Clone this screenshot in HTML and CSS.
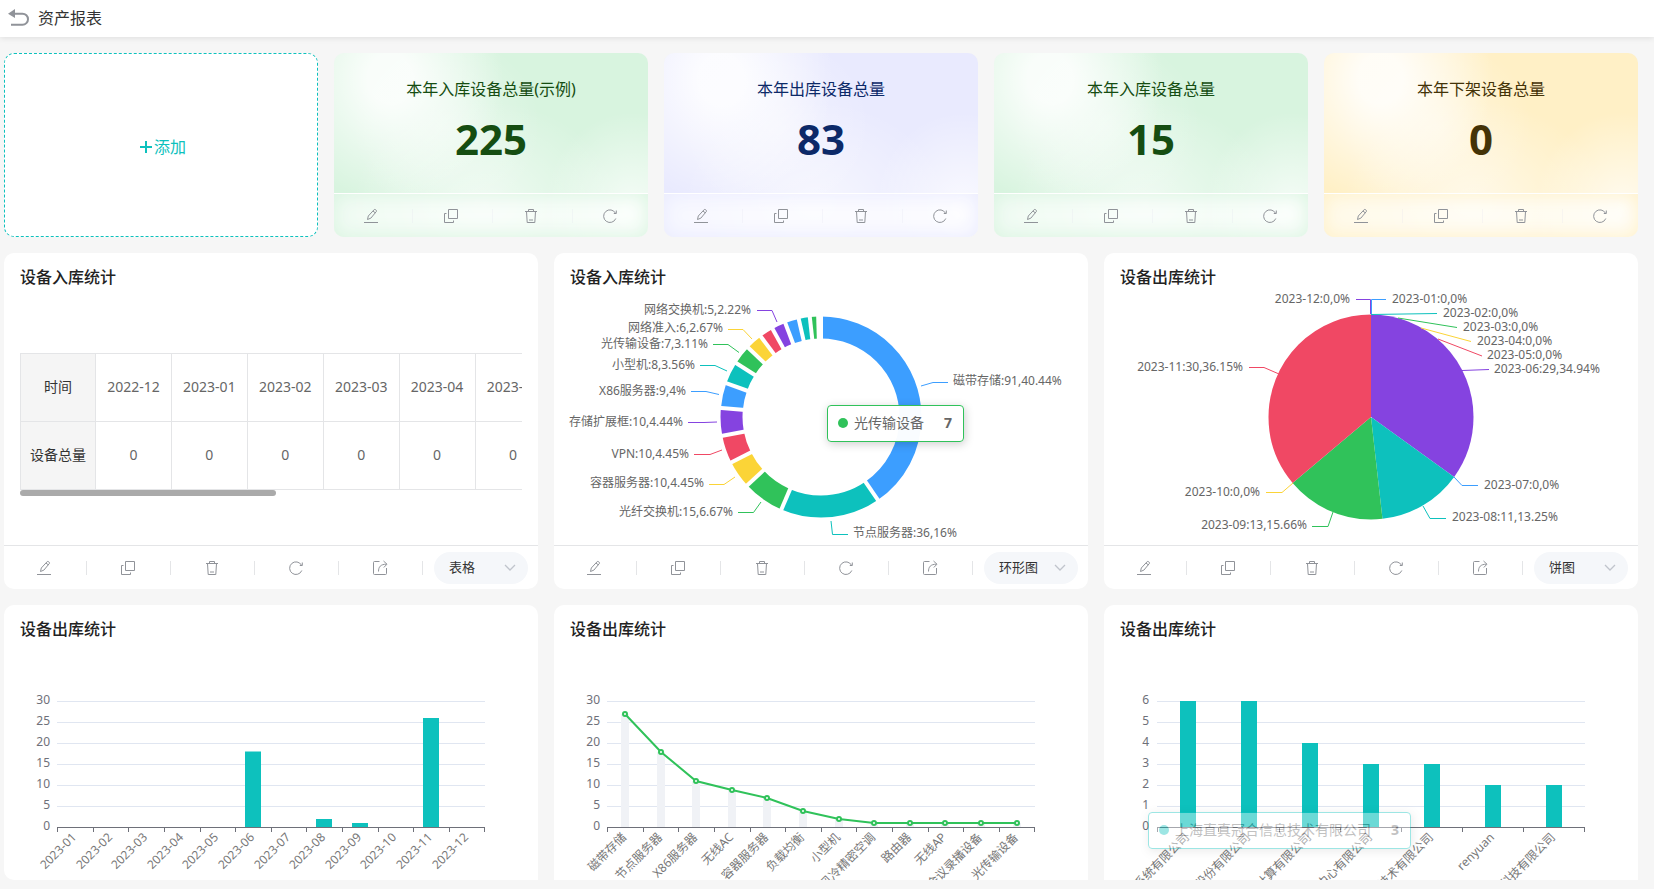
FILE: index.html
```html
<!DOCTYPE html>
<html lang="zh-CN">
<head>
<meta charset="utf-8">
<title>资产报表</title>
<link rel="stylesheet" href="styles.css">
</head>
<body>
<svg class="sprite" aria-hidden="true">
  <symbol id="i-edit" viewBox="0 0 16 16"><path d="M1 14.500h14M4.500 11.500l.8-3.500 6-6.500c.6-.6 2.700 1 2.200 1.800l-5.600 6.800zM10 3l2.200 1.800"/></symbol>
  <symbol id="i-copy" viewBox="0 0 16 16"><path d="M5.500 1.500h9v9h-9zM3.500 5.500h-2v9h9v-2"/></symbol>
  <symbol id="i-trash" viewBox="0 0 16 16"><path d="M2 3.500h12M5.500 3.500V1.500h5v2M3.500 3.500l.7 11h7.600l.7-11M6 12h4"/></symbol>
  <symbol id="i-refresh" viewBox="0 0 16 16"><path d="M13.800 10.500A6.300 6.300 0 1 1 13.500 5.200M14.300 2.500V5.500H11.800"/></symbol>
  <symbol id="i-share" viewBox="0 0 16 16"><path d="M7.500 1.500H2.500a1 1 0 0 0-1 1v11a1 1 0 0 0 1 1h11a1 1 0 0 0 1-1V8M6.500 11.500C6.500 7 8.500 4.200 14.500 4.200M11.500 1l3.500 3.200L11.800 7.500"/></symbol>
</svg>

<header class="topbar">
  <button class="back" aria-label="返回"><svg width="22" height="18" viewBox="0 0 22 18"><path class="head" d="M0 4.700L7 0v9z"/><path d="M6 4.700h8.500a5.500 5.500 0 0 1 0 11H3"/></svg></button>
  <h1>资产报表</h1>
</header>

<main class="board">
  <section class="stats">
    <button class="add"><svg width="12" height="12" viewBox="0 0 12 12"><path d="M6 0v12M0 6h12"/></svg>添加</button>
    <article class="stat green">
      <div class="stat-body"><h2>本年入库设备总量(示例)</h2><strong>225</strong></div>
      <ul class="tools">
        <li><button aria-label="编辑"><svg><use href="#i-edit"/></svg></button></li>
        <li><button aria-label="复制"><svg><use href="#i-copy"/></svg></button></li>
        <li><button aria-label="删除"><svg><use href="#i-trash"/></svg></button></li>
        <li><button aria-label="刷新"><svg><use href="#i-refresh"/></svg></button></li>
      </ul>
    </article>
    <article class="stat blue">
      <div class="stat-body"><h2>本年出库设备总量</h2><strong>83</strong></div>
      <ul class="tools">
        <li><button aria-label="编辑"><svg><use href="#i-edit"/></svg></button></li>
        <li><button aria-label="复制"><svg><use href="#i-copy"/></svg></button></li>
        <li><button aria-label="删除"><svg><use href="#i-trash"/></svg></button></li>
        <li><button aria-label="刷新"><svg><use href="#i-refresh"/></svg></button></li>
      </ul>
    </article>
    <article class="stat green">
      <div class="stat-body"><h2>本年入库设备总量</h2><strong>15</strong></div>
      <ul class="tools">
        <li><button aria-label="编辑"><svg><use href="#i-edit"/></svg></button></li>
        <li><button aria-label="复制"><svg><use href="#i-copy"/></svg></button></li>
        <li><button aria-label="删除"><svg><use href="#i-trash"/></svg></button></li>
        <li><button aria-label="刷新"><svg><use href="#i-refresh"/></svg></button></li>
      </ul>
    </article>
    <article class="stat yellow">
      <div class="stat-body"><h2>本年下架设备总量</h2><strong>0</strong></div>
      <ul class="tools">
        <li><button aria-label="编辑"><svg><use href="#i-edit"/></svg></button></li>
        <li><button aria-label="复制"><svg><use href="#i-copy"/></svg></button></li>
        <li><button aria-label="删除"><svg><use href="#i-trash"/></svg></button></li>
        <li><button aria-label="刷新"><svg><use href="#i-refresh"/></svg></button></li>
      </ul>
    </article>
  </section>

  <section class="charts">
    <article class="card">
      <h2>设备入库统计</h2>
      <div class="card-body table-body">
        <div class="scroller">
          <table>
            <tr><th scope="row">时间</th><td>2022-12</td><td>2023-01</td><td>2023-02</td><td>2023-03</td><td>2023-04</td><td>2023-05</td><td>2023-06</td><td>2023-07</td><td>2023-08</td><td>2023-09</td><td>2023-10</td><td>2023-11</td></tr>
            <tr><th scope="row">设备总量</th><td>0</td><td>0</td><td>0</td><td>0</td><td>0</td><td>0</td><td>0</td><td>0</td><td>0</td><td>0</td><td>0</td><td>0</td></tr>
          </table>
        </div>
        <div class="track"><div class="thumb"></div></div>
      </div>
      <div class="card-foot">
        <ul class="tools">
          <li><button aria-label="编辑"><svg><use href="#i-edit"/></svg></button></li>
          <li><button aria-label="复制"><svg><use href="#i-copy"/></svg></button></li>
          <li><button aria-label="删除"><svg><use href="#i-trash"/></svg></button></li>
          <li><button aria-label="刷新"><svg><use href="#i-refresh"/></svg></button></li>
          <li><button aria-label="导出"><svg><use href="#i-share"/></svg></button></li>
        </ul>
        <label class="pick"><select aria-label="图表类型"><option>表格</option><option>环形图</option><option>饼图</option></select><svg viewBox="0 0 12 8"><path d="M1 1l5 5 5-5"/></svg></label>
      </div>
    </article>

    <article class="card">
      <h2>设备入库统计</h2>
      <div class="card-body">
        <svg class="chart" viewBox="0 0 534 256">
          <g class="ring" transform="rotate(-90 267 128)">
            <circle cx="267" cy="128" r="89.500" pathLength="225" class="s-blue" stroke-dasharray="91 225"/>
            <circle cx="267" cy="128" r="89.500" pathLength="225" class="s-teal" stroke-dasharray="36 225" stroke-dashoffset="-91"/>
            <circle cx="267" cy="128" r="89.500" pathLength="225" class="s-green" stroke-dasharray="15 225" stroke-dashoffset="-127"/>
            <circle cx="267" cy="128" r="89.500" pathLength="225" class="s-yellow" stroke-dasharray="10 225" stroke-dashoffset="-142"/>
            <circle cx="267" cy="128" r="89.500" pathLength="225" class="s-red" stroke-dasharray="10 225" stroke-dashoffset="-152"/>
            <circle cx="267" cy="128" r="89.500" pathLength="225" class="s-purple" stroke-dasharray="10 225" stroke-dashoffset="-162"/>
            <circle cx="267" cy="128" r="89.500" pathLength="225" class="s-blue" stroke-dasharray="9 225" stroke-dashoffset="-172"/>
            <circle cx="267" cy="128" r="89.500" pathLength="225" class="s-teal" stroke-dasharray="8 225" stroke-dashoffset="-181"/>
            <circle cx="267" cy="128" r="89.500" pathLength="225" class="s-green" stroke-dasharray="7 225" stroke-dashoffset="-189"/>
            <circle cx="267" cy="128" r="89.500" pathLength="225" class="s-yellow" stroke-dasharray="6 225" stroke-dashoffset="-196"/>
            <circle cx="267" cy="128" r="89.500" pathLength="225" class="s-red" stroke-dasharray="5 225" stroke-dashoffset="-202"/>
            <circle cx="267" cy="128" r="89.500" pathLength="225" class="s-purple" stroke-dasharray="5 225" stroke-dashoffset="-207"/>
            <circle cx="267" cy="128" r="89.500" pathLength="225" class="s-blue" stroke-dasharray="5 225" stroke-dashoffset="-212"/>
            <circle cx="267" cy="128" r="89.500" pathLength="225" class="s-teal" stroke-dasharray="4 225" stroke-dashoffset="-217"/>
            <circle cx="267" cy="128" r="89.500" pathLength="225" class="s-green" stroke-dasharray="3 225" stroke-dashoffset="-221"/>
          </g>
          <g class="gaps" transform="translate(267 128)">
            <path d="M0-76V-103"/>
            <path d="M0-76V-103" transform="rotate(145.600)"/>
            <path d="M0-76V-103" transform="rotate(203.200)"/>
            <path d="M0-76V-103" transform="rotate(227.200)"/>
            <path d="M0-76V-103" transform="rotate(243.200)"/>
            <path d="M0-76V-103" transform="rotate(259.200)"/>
            <path d="M0-76V-103" transform="rotate(275.200)"/>
            <path d="M0-76V-103" transform="rotate(289.600)"/>
            <path d="M0-76V-103" transform="rotate(302.400)"/>
            <path d="M0-76V-103" transform="rotate(313.600)"/>
            <path d="M0-76V-103" transform="rotate(323.200)"/>
            <path d="M0-76V-103" transform="rotate(331.200)"/>
            <path d="M0-76V-103" transform="rotate(339.200)"/>
            <path d="M0-76V-103" transform="rotate(347.200)"/>
            <path d="M0-76V-103" transform="rotate(353.600)"/>
            <path d="M0-76V-103" transform="rotate(358.400)"/>
          </g>
          <g class="leads">
            <path class="s-blue" d="M367 97L379 93.500H394"/>
            <path class="s-teal" d="M277 232L278.500 245.500H294"/>
            <path class="s-green" d="M207 213L199.500 223.500H184"/>
            <path class="s-yellow" d="M181 188L170 195.500H155"/>
            <path class="s-red" d="M168 161L156 165.500H140"/>
            <path class="s-purple" d="M163 133L150 133.500H134"/>
            <path class="s-blue" d="M165 105.500L152 102.500H137"/>
            <path class="s-teal" d="M173 82L161 76.500H146"/>
            <path class="s-green" d="M185 63.500L174 55.500H159"/>
            <path class="s-yellow" d="M198 50L189 40.500H174"/>
            <path class="s-purple" d="M223 33L218 21.500H203"/>
          </g>
          <g class="labels">
            <text x="399" y="96">磁带存储:91,40.44%</text>
            <text x="299" y="248">节点服务器:36,16%</text>
          </g>
          <g class="labels end">
            <text x="179" y="227">光纤交换机:15,6.67%</text>
            <text x="150" y="198">容器服务器:10,4.45%</text>
            <text x="135" y="169">VPN:10,4.45%</text>
            <text x="129" y="137">存储扩展框:10,4.44%</text>
            <text x="132" y="106">X86服务器:9,4%</text>
            <text x="141" y="80">小型机:8,3.56%</text>
            <text x="154" y="59">光传输设备:7,3.11%</text>
            <text x="169" y="43">网络准入:6,2.67%</text>
            <text x="197" y="25">网络交换机:5,2.22%</text>
          </g>
        </svg>
      </div>
      <div class="tip tip-ring"><i></i><span>光传输设备</span><b>7</b></div>
      <div class="card-foot">
        <ul class="tools">
          <li><button aria-label="编辑"><svg><use href="#i-edit"/></svg></button></li>
          <li><button aria-label="复制"><svg><use href="#i-copy"/></svg></button></li>
          <li><button aria-label="删除"><svg><use href="#i-trash"/></svg></button></li>
          <li><button aria-label="刷新"><svg><use href="#i-refresh"/></svg></button></li>
          <li><button aria-label="导出"><svg><use href="#i-share"/></svg></button></li>
        </ul>
        <label class="pick"><select aria-label="图表类型"><option>环形图</option><option>表格</option><option>饼图</option></select><svg viewBox="0 0 12 8"><path d="M1 1l5 5 5-5"/></svg></label>
      </div>
    </article>

    <article class="card">
      <h2>设备出库统计</h2>
      <div class="card-body">
        <svg class="chart" viewBox="0 0 534 256">
          <g class="pie" transform="rotate(-90 267 128)">
            <circle cx="267" cy="128" r="51.250" pathLength="83" class="s-purple" stroke-dasharray="29 83"/>
            <circle cx="267" cy="128" r="51.250" pathLength="83" class="s-teal" stroke-dasharray="11 83" stroke-dashoffset="-29"/>
            <circle cx="267" cy="128" r="51.250" pathLength="83" class="s-green" stroke-dasharray="13 83" stroke-dashoffset="-40"/>
            <circle cx="267" cy="128" r="51.250" pathLength="83" class="s-red" stroke-dasharray="30 83" stroke-dashoffset="-53"/>
          </g>
          <g class="leads">
            <path class="s-blue" d="M267.500 25V10.500H282"/>
            <path class="s-purple" d="M266.500 25V10.500H252"/>
            <path class="s-teal" d="M267 25.500L333 24.500"/>
            <path class="s-green" d="M294 29L353 38.500"/>
            <path class="s-yellow" d="M317 39L367 52.500"/>
            <path class="s-red" d="M334 50L378 67"/>
            <path class="s-purple" d="M358 81.500L385 80.500"/>
            <path class="s-blue" d="M350 188L358 196.500H374"/>
            <path class="s-teal" d="M319 217L326 229.500H342"/>
            <path class="s-green" d="M229 223L224 237.500H208"/>
            <path class="s-yellow" d="M189 194L178 203.500H162"/>
            <path class="s-red" d="M175 85L160 78.500H145"/>
          </g>
          <g class="labels">
            <text x="288" y="14">2023-01:0,0%</text>
            <text x="339" y="28">2023-02:0,0%</text>
            <text x="359" y="42">2023-03:0,0%</text>
            <text x="373" y="56">2023-04:0,0%</text>
            <text x="383" y="70">2023-05:0,0%</text>
            <text x="390" y="84">2023-06:29,34.94%</text>
            <text x="380" y="200">2023-07:0,0%</text>
            <text x="348" y="232">2023-08:11,13.25%</text>
          </g>
          <g class="labels end">
            <text x="246" y="14">2023-12:0,0%</text>
            <text x="203" y="240">2023-09:13,15.66%</text>
            <text x="156" y="207">2023-10:0,0%</text>
            <text x="139" y="82">2023-11:30,36.15%</text>
          </g>
        </svg>
      </div>
      <div class="card-foot">
        <ul class="tools">
          <li><button aria-label="编辑"><svg><use href="#i-edit"/></svg></button></li>
          <li><button aria-label="复制"><svg><use href="#i-copy"/></svg></button></li>
          <li><button aria-label="删除"><svg><use href="#i-trash"/></svg></button></li>
          <li><button aria-label="刷新"><svg><use href="#i-refresh"/></svg></button></li>
          <li><button aria-label="导出"><svg><use href="#i-share"/></svg></button></li>
        </ul>
        <label class="pick"><select aria-label="图表类型"><option>饼图</option><option>表格</option><option>环形图</option></select><svg viewBox="0 0 12 8"><path d="M1 1l5 5 5-5"/></svg></label>
      </div>
    </article>

    <article class="card">
      <h2>设备出库统计</h2>
      <div class="card-body">
        <svg class="chart" viewBox="0 0 534 256">
          <path class="grid" d="M53 60.500H481M53 81.500H481M53 102.500H481M53 123.500H481M53 144.500H481M53 165.500H481"/>
          <path class="bars" d="M241 187V110.500h16V187zM312 187V178h16v9zM348 187V182h16v5zM419 187V77h16V187z"/>
          <path class="axis" d="M53 186.500H481M53.500 187v4M89.500 187v4M124.500 187v4M160.500 187v4M196.500 187v4M231.500 187v4M267.500 187v4M302.500 187v4M338.500 187v4M374.500 187v4M409.500 187v4M445.500 187v4M480.500 187v4"/>
          <g class="nums"><text x="46" y="63">30</text><text x="46" y="84">25</text><text x="46" y="105">20</text><text x="46" y="126">15</text><text x="46" y="147">10</text><text x="46" y="168">5</text><text x="46" y="189">0</text></g>
          <g class="cats">
            <text transform="translate(73 197) rotate(-45)">2023-01</text>
            <text transform="translate(109 197) rotate(-45)">2023-02</text>
            <text transform="translate(144 197) rotate(-45)">2023-03</text>
            <text transform="translate(180 197) rotate(-45)">2023-04</text>
            <text transform="translate(215 197) rotate(-45)">2023-05</text>
            <text transform="translate(251 197) rotate(-45)">2023-06</text>
            <text transform="translate(287 197) rotate(-45)">2023-07</text>
            <text transform="translate(322 197) rotate(-45)">2023-08</text>
            <text transform="translate(358 197) rotate(-45)">2023-09</text>
            <text transform="translate(393 197) rotate(-45)">2023-10</text>
            <text transform="translate(429 197) rotate(-45)">2023-11</text>
            <text transform="translate(465 197) rotate(-45)">2023-12</text>
          </g>
        </svg>
      </div>
      <div class="card-foot"></div>
    </article>

    <article class="card">
      <h2>设备出库统计</h2>
      <div class="card-body">
        <svg class="chart" viewBox="0 0 534 256">
          <path class="grid" d="M53 60.500H481M53 81.500H481M53 102.500H481M53 123.500H481M53 144.500H481M53 165.500H481"/>
          <path class="shade" d="M67 186V73h8V186zM103 186V111h8V186zM138 186V140h8V186zM174 186V149h8V186zM209 186V157h8V186zM245 186V170h8V186zM281 186V178h8V186zM316 186V182h8V186zM352 186V182h8V186zM387 186V182h8V186zM423 186V182h8V186zM459 186V182h8V186z"/>
          <path class="axis" d="M53 186.500H481M53.500 187v4M89.500 187v4M124.500 187v4M160.500 187v4M196.500 187v4M231.500 187v4M267.500 187v4M302.500 187v4M338.500 187v4M374.500 187v4M409.500 187v4M445.500 187v4M480.500 187v4"/>
          <g class="line">
            <polyline points="71,73 107,111 142,140 178,149 213,157 249,170 285,178 320,182 356,182 391,182 427,182 463,182"/>
            <circle cx="71" cy="73" r="2"/><circle cx="107" cy="111" r="2"/><circle cx="142" cy="140" r="2"/><circle cx="178" cy="149" r="2"/><circle cx="213" cy="157" r="2"/><circle cx="249" cy="170" r="2"/><circle cx="285" cy="178" r="2"/><circle cx="320" cy="182" r="2"/><circle cx="356" cy="182" r="2"/><circle cx="391" cy="182" r="2"/><circle cx="427" cy="182" r="2"/><circle cx="463" cy="182" r="2"/>
          </g>
          <g class="nums"><text x="46" y="63">30</text><text x="46" y="84">25</text><text x="46" y="105">20</text><text x="46" y="126">15</text><text x="46" y="147">10</text><text x="46" y="168">5</text><text x="46" y="189">0</text></g>
          <g class="cats">
            <text transform="translate(73 197) rotate(-45)">磁带存储</text>
            <text transform="translate(109 197) rotate(-45)">节点服务器</text>
            <text transform="translate(144 197) rotate(-45)">X86服务器</text>
            <text transform="translate(180 197) rotate(-45)">无线AC</text>
            <text transform="translate(215 197) rotate(-45)">容器服务器</text>
            <text transform="translate(251 197) rotate(-45)">负载均衡</text>
            <text transform="translate(287 197) rotate(-45)">小型机</text>
            <text transform="translate(322 197) rotate(-45)">风冷精密空调</text>
            <text transform="translate(358 197) rotate(-45)">路由器</text>
            <text transform="translate(393 197) rotate(-45)">无线AP</text>
            <text transform="translate(429 197) rotate(-45)">会议录播设备</text>
            <text transform="translate(465 197) rotate(-45)">光传输设备</text>
          </g>
        </svg>
      </div>
      <div class="card-foot"></div>
    </article>

    <article class="card">
      <h2>设备出库统计</h2>
      <div class="card-body">
        <svg class="chart" viewBox="0 0 534 256">
          <path class="grid" d="M53 60.500H481M53 81.500H481M53 102.500H481M53 123.500H481M53 144.500H481M53 165.500H481"/>
          <path class="bars" d="M76 187V60h16V187zM137 187V60h16V187zM198 187V102h16V187zM259 187V123h16V187zM320 187V123h16V187zM381 187V144h16V187zM442 187V144h16V187z"/>
          <path class="axis" d="M53 186.500H481M53.500 187v4M114.500 187v4M175.500 187v4M236.500 187v4M297.500 187v4M358.500 187v4M419.500 187v4M480.500 187v4"/>
          <g class="nums"><text x="45" y="63">6</text><text x="45" y="84">5</text><text x="45" y="105">4</text><text x="45" y="126">3</text><text x="45" y="147">2</text><text x="45" y="168">1</text><text x="45" y="189">0</text></g>
          <g class="cats">
            <text transform="translate(86 197) rotate(-45)">系统有限公司</text>
            <text transform="translate(147 197) rotate(-45)">股份有限公司</text>
            <text transform="translate(208 197) rotate(-45)">计算有限公司</text>
            <text transform="translate(269 197) rotate(-45)">中心有限公司</text>
            <text transform="translate(330 197) rotate(-45)">技术有限公司</text>
            <text transform="translate(391 197) rotate(-45)">renyuan</text>
            <text transform="translate(452 197) rotate(-45)">科技有限公司</text>
          </g>
        </svg>
      </div>
      <div class="tip tip-bar"><i></i><span>上海直真冠合信息技术有限公司</span><b>3</b></div>
      <div class="card-foot"></div>
    </article>
  </section>
</main>
</body>
</html>
```

FILE: styles.css
```css
* { box-sizing: border-box; }

:root {
  --teal: #0dc1bd;
  --blue: #3c9eff;
  --green: #30c25a;
  --yellow: #fbd437;
  --red: #f04864;
  --purple: #8543e0;
}

body {
  margin: 0;
  height: 100vh;
  display: flex;
  flex-direction: column;
  overflow: hidden;
  background: #f6f6f6;
  color: #333;
  font: 14px/20px "Noto Sans", "Noto Sans CJK SC", sans-serif;
}

h1, h2, ul { margin: 0; padding: 0; font-weight: 400; }
ul { list-style: none; }
button { border: 0; padding: 0; background: none; font: inherit; color: inherit; cursor: pointer; }
.sprite { position: absolute; width: 0; height: 0; }

.topbar {
  flex: none;
  display: flex;
  align-items: center;
  gap: 8px;
  height: 37px;
  padding: 0 8px 2px;
  background: #fff;
  box-shadow: 0 1px 6px rgba(0, 0, 0, .1);
}
.topbar h1 { font-size: 16px; line-height: 24px; }
.back { display: flex; }
.back svg { fill: none; stroke: #909399; stroke-width: 2; }
.back .head { fill: #909399; stroke: none; }

.board {
  flex: 1;
  min-height: 0;
  overflow: hidden;
  margin: 16px 16px 9px 4px;
  border-bottom-left-radius: 10px;
}
.stats { display: grid; grid-template-columns: repeat(5, 1fr); gap: 16px; }
.charts { display: grid; grid-template-columns: repeat(3, 1fr); gap: 16px; margin-top: 16px; }

.add {
  display: flex;
  align-items: center;
  justify-content: center;
  gap: 2px;
  padding: 4px 0 0 4px;
  border: 1px dashed var(--teal);
  border-radius: 10px;
  background: #fff;
  color: var(--teal);
  font-size: 16px;
}
.add svg { stroke: currentColor; stroke-width: 2; }

.stat {
  overflow: hidden;
  border-radius: 10px;
  text-align: center;
  background:
    radial-gradient(ellipse 36% 68% at 18% 14%, rgba(255, 255, 255, .85) 20%, rgba(255, 255, 255, 0)),
    radial-gradient(ellipse 30% 50% at 36% 40%, rgba(255, 255, 255, .4), rgba(255, 255, 255, 0)),
    radial-gradient(ellipse 28% 52% at 95% 84%, rgba(255, 255, 255, .75), rgba(255, 255, 255, 0)),
    radial-gradient(ellipse 42% 56% at 48% 82%, rgba(255, 255, 255, .6), rgba(255, 255, 255, 0)),
    var(--tint);
}
.stat-body { height: 140px; padding-top: 24px; }
.stat h2 { font-size: 16px; line-height: 24px; }
.stat strong { display: block; margin-top: 8px; font-size: 42px; line-height: 60px; font-weight: 700; }
.green { --tint: #d8f4df; color: #154d11; }
.blue { --tint: #e9eafe; color: #0c2968; }
.yellow { --tint: #fff0c6; color: #443307; }

.tools { display: grid; height: 44px; }
.tools li { display: flex; align-items: center; padding-right: 1px; }
.tools button { flex: 1; display: flex; justify-content: center; padding-right: 2px; }
.tools svg { width: 16px; height: 16px; fill: none; stroke: #909399; stroke-width: 1; }
.tools li::after { content: ""; width: 1px; height: 14px; background: #e4e5e7; }

.stat .tools {
  grid-template-columns: repeat(3, 80fr) 74fr;
  border-top: 1px solid #fff;
  background: rgba(255, 255, 255, .65);
  box-shadow: inset 0 0 20px var(--tint);
}
.stat .tools button { padding-right: 4px; }
.stat .tools li::after { background: rgba(220, 220, 235, .2); }
.stat .tools li:last-child { padding-left: 2px; }
.stat .tools li:last-child::after { display: none; }

.card {
  position: relative;
  display: flex;
  flex-direction: column;
  min-width: 0;
  border-radius: 10px;
  background: #fff;
}
.card h2 { padding: 12px 16px 0; font-size: 16px; line-height: 24px; font-weight: 500; color: #222; }
.card-body { flex: 1; min-height: 256px; min-width: 0; }
.chart { display: block; width: 100%; }
.card-foot { display: flex; align-items: center; min-height: 44px; border-top: 1px solid #e4e5e7; }
.card-foot .tools { flex: 1; height: 43px; grid-template-columns: repeat(5, 1fr); }

.pick { position: relative; flex: none; margin: 0 10px; }
.pick select {
  appearance: none;
  display: block;
  width: 94px;
  height: 32px;
  padding: 0 15px 2px;
  border: 0;
  border-radius: 16px;
  background: #f5f7fa;
  color: #333;
  font: 13px/20px "Noto Sans", "Noto Sans CJK SC", sans-serif;
}
.pick svg { position: absolute; right: 12px; top: 12px; width: 12px; height: 8px; fill: none; stroke: #c0c4cc; stroke-width: 1.300; pointer-events: none; }

.table-body { display: flex; flex-direction: column; justify-content: center; padding: 14px 16px 0; }
.scroller { overflow: hidden; }
table { table-layout: fixed; width: 987px; border-collapse: collapse; }
th, td { height: 68px; padding: 0; border: 1px solid #e4e5e7; text-align: center; font-weight: 400; color: #666; }
th { width: 75px; background: #f5f5f5; color: #333; }
.track { height: 6px; }
.thumb { width: 51%; height: 6px; border-radius: 3px; background: #aaa; }

.ring, .pie, .leads, .gaps { fill: none; }
.ring { stroke-width: 22; }
.pie { stroke-width: 102.500; }
.gaps { stroke: #fff; stroke-width: 4; }
.leads { stroke-width: 1; }
.s-blue { stroke: var(--blue); }
.s-teal { stroke: var(--teal); }
.s-green { stroke: var(--green); }
.s-yellow { stroke: var(--yellow); }
.s-red { stroke: var(--red); }
.s-purple { stroke: var(--purple); }

.labels { font-size: 12px; fill: #666; }
.end, .nums, .cats { text-anchor: end; }
.nums, .cats { font-size: 12px; fill: #6e7079; }
.cats { fill: #777; }
.grid { stroke: #e0e6f1; }
.axis { stroke: #6e7079; }
.bars { fill: var(--teal); }
.shade { fill: #f0f2f6; }
.line { fill: none; stroke: var(--green); stroke-width: 2; }
.line circle { fill: #fff; }

.tip {
  position: absolute;
  display: flex;
  align-items: center;
  height: 37px;
  padding: 0 11px 2px 10px;
  border: 1px solid;
  border-radius: 4px;
  background: rgba(255, 255, 255, .97);
  box-shadow: 1px 2px 10px rgba(0, 0, 0, .2);
  white-space: nowrap;
}
.tip i { width: 10px; height: 10px; margin-right: 6px; border-radius: 50%; background: currentColor; }
.tip span, .tip b { color: #666; }
.tip b { margin-left: 20px; }
.tip-ring { left: 273px; top: 152px; color: var(--green); }
.tip-bar { left: 44px; top: 207px; color: var(--teal); opacity: .4; }
```
